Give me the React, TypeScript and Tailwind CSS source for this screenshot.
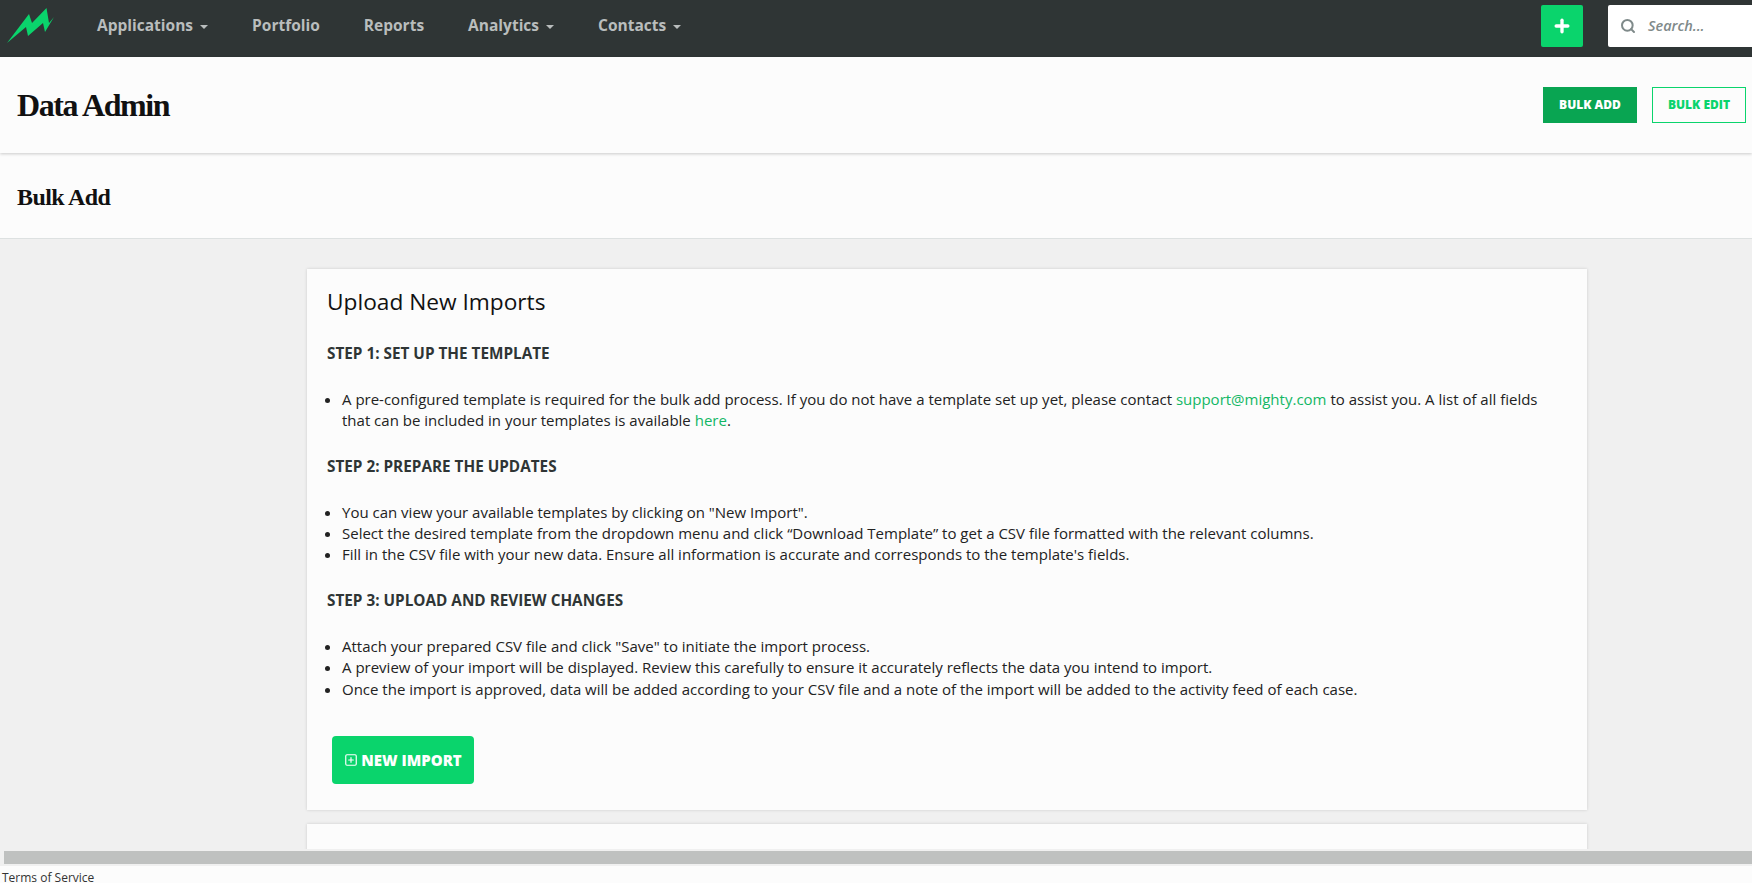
import { Plus, Search, SquarePlus } from 'lucide-react';

const sans = 'font-["Open_Sans",sans-serif]';

function Caret() {
  return <span className="inline-block ml-[7px] align-middle border-x-[4px] border-x-transparent border-t-[4px] border-t-[#b9bdbd]" />;
}

function Step({ title, children }: { title: string; children: React.ReactNode }) {
  return (
    <>
      <h4 className="text-[15.3px] leading-[21px] font-bold uppercase text-[#2f3535] mb-[24.5px]">{title}</h4>
      <ul className="list-disc pl-[15px] mb-[25px] text-[15px] leading-[21.3px] text-[#222]">{children}</ul>
    </>
  );
}

export default function App() {
  return (
    <div className={`h-screen flex flex-col overflow-hidden bg-[#f0f0f0] ${sans}`}>
      {/* Navbar */}
      <nav className="h-[57px] shrink-0 bg-[#2f3535] flex items-center pb-[6px]">
        <svg width="70" height="57" viewBox="0 0 70 57" className="shrink-0 self-start">
          <path d="M7 43 L29 14 L32 23 L46.5 8 L49 23 L54 17 L45 32 L43 23 L28 36 L26 27 Z" fill="#0ad46c" />
        </svg>
        <div className="flex items-center gap-[44px] ml-[27px] text-[15.5px] font-bold text-[#b9bdbd]">
          <span>Applications<Caret /></span>
          <span>Portfolio</span>
          <span>Reports</span>
          <span>Analytics<Caret /></span>
          <span>Contacts<Caret /></span>
        </div>
        <div className="ml-auto flex items-center">
          <button className="w-[42px] h-[42px] rounded-[2px] bg-[#0ad46c] flex items-center justify-center text-white">
            <Plus size={20} strokeWidth={4} />
          </button>
          <div className="w-[144px] h-[42px] ml-[25px] bg-white rounded-l-[2px] flex items-center pl-[12px] text-[#7f8a8a]">
            <Search size={16} strokeWidth={3} />
            <span className="ml-[12px] text-[14.5px] italic font-semibold">Search...</span>
          </div>
        </div>
      </nav>

      {/* Title bar */}
      <header className="relative z-10 h-[96px] shrink-0 bg-[#fcfcfc] shadow-[0_1px_3px_rgba(0,0,0,0.2)] flex items-center px-[17px]">
        <h1 className='font-["Liberation_Serif",serif] font-bold text-[32px] tracking-[-1.4px] text-[#111]'>Data Admin</h1>
        <div className="ml-auto flex items-center gap-[15px] mr-[-11px]">
          <button className="w-[94px] h-[36px] bg-[#09a552] text-white text-[12px] font-extrabold uppercase">Bulk Add</button>
          <button className="w-[94px] h-[36px] border border-[#0ad46c] text-[#0ad46c] bg-[#fcfcfc] text-[12px] font-extrabold uppercase">Bulk Edit</button>
        </div>
      </header>

      <section className="h-[86px] shrink-0 bg-[#fcfcfc] border-b border-[#dde1e1] flex items-center px-[17px] pt-[2px]">
        <h2 className='font-["Liberation_Serif",serif] font-bold text-[24px] tracking-[-0.6px] text-[#111]'>Bulk Add</h2>
      </section>

      {/* Content */}
      <main className="flex-1 min-h-0 overflow-hidden pt-[30px] pl-[307px] pr-[165px]">
        <div className="bg-[#fcfcfc] shadow-[0_0_3px_rgba(0,0,0,0.15)] px-[20px] pt-[17px] pb-[26px] mb-[14px]">
          <h3 className="text-[22.7px] leading-[31px] text-[#111] mb-[26px]">Upload New Imports</h3>
          <Step title="Step 1: Set up the template">
            <li>
              A pre-configured template is required for the bulk add process. If you do not have a template set up yet, please contact{' '}
              <a className="text-[#13b765]">support@mighty.com</a> to assist you. A list of all fields that can be included in your templates is available{' '}
              <a className="text-[#13b765]">here</a>.
            </li>
          </Step>
          <Step title="Step 2: Prepare the updates">
            <li>You can view your available templates by clicking on "New Import".</li>
            <li>Select the desired template from the dropdown menu and click “Download Template” to get a CSV file formatted with the relevant columns.</li>
            <li>Fill in the CSV file with your new data. Ensure all information is accurate and corresponds to the template's fields.</li>
          </Step>
          <Step title="Step 3: Upload and review changes">
            <li>Attach your prepared CSV file and click "Save" to initiate the import process.</li>
            <li>A preview of your import will be displayed. Review this carefully to ensure it accurately reflects the data you intend to import.</li>
            <li>Once the import is approved, data will be added according to your CSV file and a note of the import will be added to the activity feed of each case.</li>
          </Step>
          <button className="ml-[5px] mt-[36px] w-[142px] h-[48px] rounded-[4px] bg-[#0ad46c] text-white text-[15px] font-extrabold uppercase flex items-center justify-center gap-[3px]">
            <SquarePlus size={14} />
            New Import
          </button>
        </div>
        <div className="h-[200px] bg-[#fcfcfc] shadow-[0_0_3px_rgba(0,0,0,0.15)]" />
      </main>

      {/* Horizontal scrollbar */}
      <div className="h-[17px] shrink-0 bg-[#f0f0f0] pl-[4px] pt-[2px]">
        <div className="h-[13px] bg-[#bfc1c0]" />
      </div>

      <footer className="h-[17px] shrink-0 bg-[#fcfcfc] pl-[2px] text-[12px] leading-[23px] text-[#333] overflow-hidden">Terms of Service</footer>
    </div>
  );
}
